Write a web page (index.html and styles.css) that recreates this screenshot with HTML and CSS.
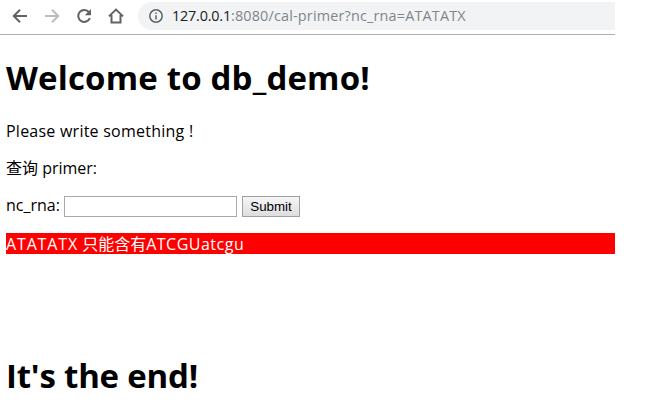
FILE: index.html
```html
<!DOCTYPE html>
<html lang="zh">
<head>
<meta charset="utf-8">
<title>db_demo</title>
<link rel="stylesheet" href="styles.css">
</head>
<body>
<div class="window">
  <header class="toolbar">
    <nav class="nav">
      <svg class="icon" viewBox="0 0 16 16"><path d="M15 8H2.500M8 1.800L1.800 8L8 14.200"/></svg>
      <svg class="icon disabled" viewBox="0 0 16 16"><path d="M1 8H13.500M8 1.800L14.200 8L8 14.200"/></svg>
      <svg class="icon" viewBox="0 0 16 16"><path d="M13 4.200A6 6 0 1 0 13.900 10"/><path class="solid" d="M15 1V7.200H8.800Z"/></svg>
      <svg class="icon" viewBox="0 0 16 16"><path d="M.9 8.400L8 1.600L15.100 8.400M3.500 7V14.500H12.500V7"/></svg>
    </nav>
    <div class="address">
      <svg class="info" viewBox="0 0 14 14"><circle cx="7" cy="7" r="6.200"/><path d="M7 6.200V10.500M7 3.500V5"/></svg>
      <span class="url"><span class="host">127.0.0.1</span>:8080/cal-primer?nc_rna=ATATATX</span>
    </div>
  </header>
  <main class="page">
    <h1 class="welcome">Welcome to db_demo!</h1>
    <p class="intro">Please write something !</p>
    <p class="query">查询 primer:</p>
    <form class="form">
      <label for="rna">nc_rna:</label>
      <input id="rna" class="field" type="text">
      <button class="submit" type="button">Submit</button>
    </form>
    <p class="error"><span class="value">ATATATX</span> 只能含有<span class="letters">ATCGUatcgu</span></p>
    <h1 class="ending">It's the end!</h1>
  </main>
</div>
</body>
</html>
```
FILE: styles.css
```css
* { box-sizing: border-box; }
body {
  margin: 0;
  background: #fff;
  color: #000;
  font: 16px/21px "Open Sans", "Noto Sans CJK SC", sans-serif;
  overflow: hidden;
}
.window { width: 615px; }
.toolbar {
  display: flex;
  height: 35px;
  padding-top: 2px;
  border-bottom: 1px solid #b0b0b0;
}
.nav {
  display: flex;
  align-items: center;
  gap: 16px;
  width: 138px;
  height: 28px;
  padding-left: 12px;
}
.icon {
  width: 16px;
  height: 16px;
  fill: none;
  stroke: #5f6368;
  stroke-width: 2;
}
.icon.disabled { stroke: #babcbe; }
.icon .solid { fill: #5f6368; stroke: none; }
.address {
  display: flex;
  flex: 1;
  align-items: center;
  gap: 9px;
  height: 28px;
  padding-left: 11px;
  border-radius: 14px 0 0 14px;
  background: #f1f3f4;
}
.info { width: 14px; height: 14px; fill: none; stroke: #5f6368; stroke-width: 1.5; }
.url { padding-bottom: 2px; color: #80868b; font-size: 14.4px; letter-spacing: .18px; white-space: nowrap; }
.host { color: #202124; letter-spacing: -.2px; }
.page { padding: 21px 0 0 6px; }
h1 { margin: 0; font-size: 33px; line-height: 43px; white-space: nowrap; }
.welcome { letter-spacing: .17px; }
p { margin: 0; height: 21px; white-space: nowrap; }
.intro { margin-top: 22px; letter-spacing: .24px; }
.query { margin-top: 16px; }
.form { display: flex; height: 21px; margin: 17px 0 16px; }
label { width: 58px; line-height: 19px; white-space: nowrap; }
.field { width: 173px; height: 21px; margin: 0; border: 1px solid #a9a9a9; background: #fff; }
.submit {
  width: 58px;
  height: 21px;
  margin-left: 5px;
  padding: 0;
  border: 1px solid #a0a0a0;
  background: linear-gradient(#f6f6f6, #dedede);
  color: #000;
  font: 13.333px/18px "Liberation Sans", sans-serif;
}
.error { background: #f00; color: #fff; line-height: 23px; }
.value { letter-spacing: .85px; }
.letters { letter-spacing: .5px; }
.ending { margin-top: 100px; letter-spacing: -.2px; }
```
